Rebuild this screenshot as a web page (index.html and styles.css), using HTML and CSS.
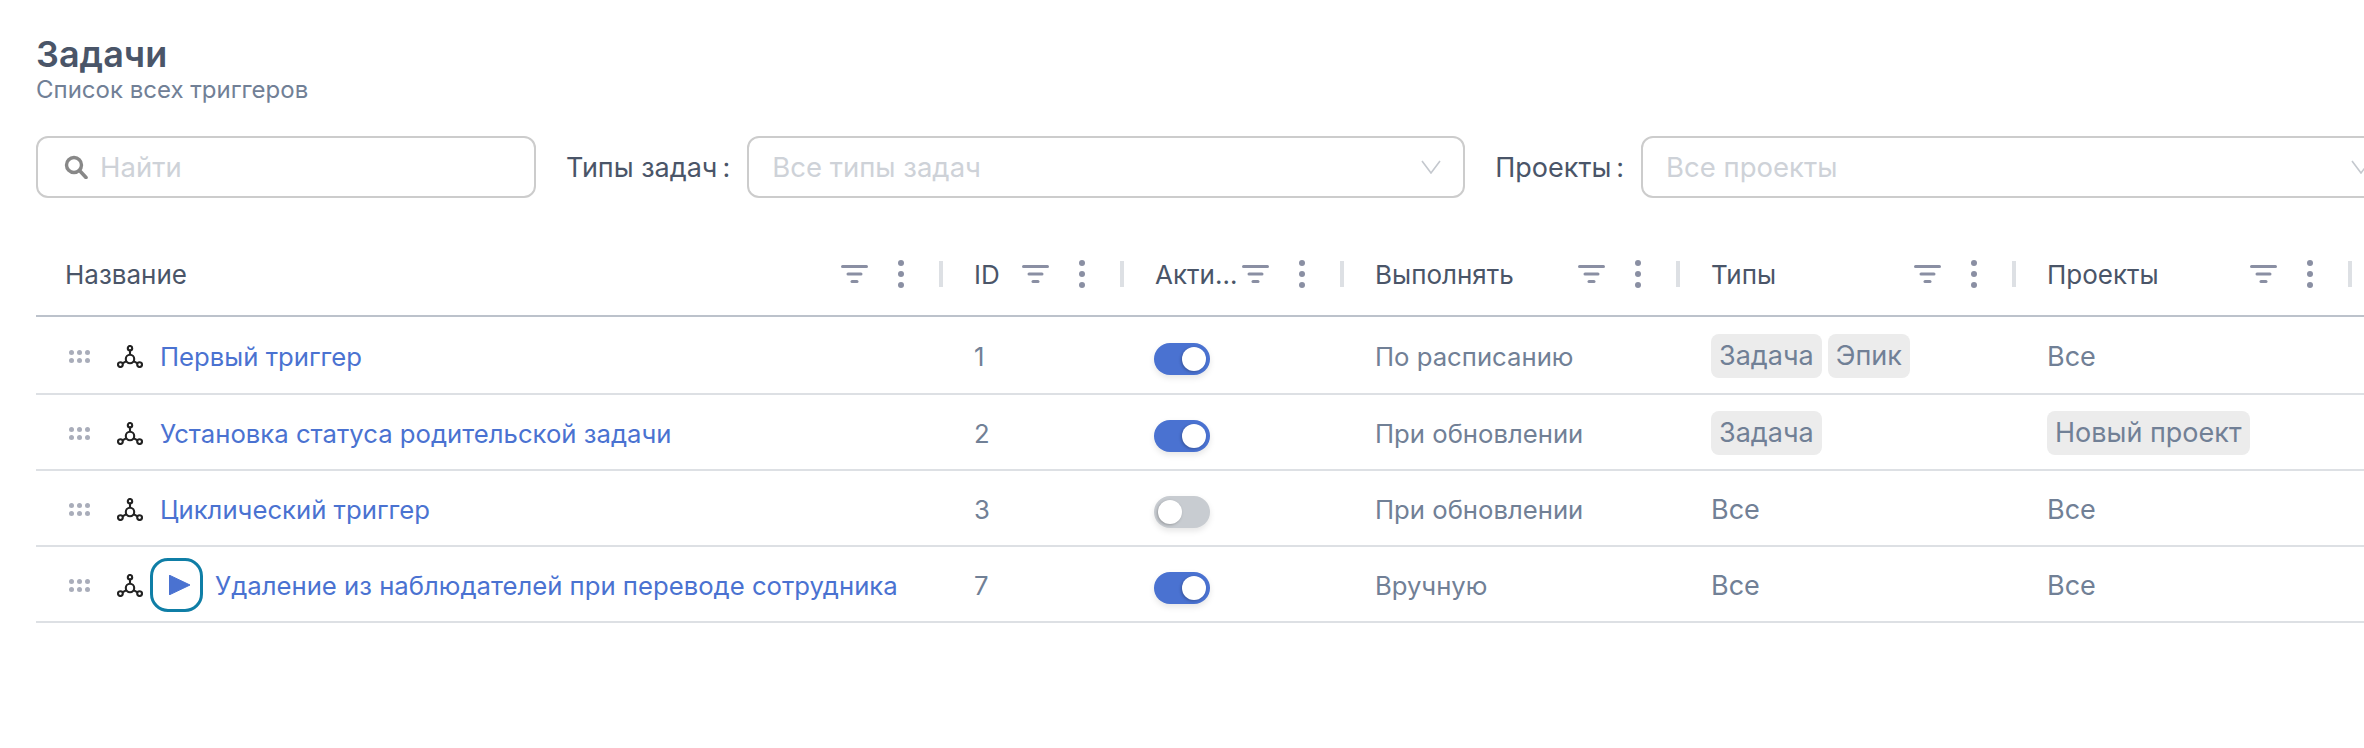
FILE: index.html
```html
<!DOCTYPE html>
<html>
<head>
<meta charset="UTF-8">
<title>Задачи</title>
<meta name="viewport" content="width=device-width, initial-scale=1.0">
<link rel="stylesheet" href="styles.css">
</head>
<body>
	<svg class="sprite" width="0" height="0">
		<symbol id="ico-filter" viewBox="0 0 27 18">
			<rect x="0" y="0" width="27" height="3" rx="1.5"/>
			<rect x="5.5" y="7.5" width="16" height="3" rx="1.5"/>
			<rect x="9.5" y="15" width="8" height="3" rx="1.5"/>
		</symbol>
		<symbol id="ico-more" viewBox="0 0 6 28">
			<circle cx="3" cy="3" r="3"/>
			<circle cx="3" cy="14" r="3"/>
			<circle cx="3" cy="25" r="3"/>
		</symbol>
		<symbol id="ico-drag" viewBox="0 0 21 13">
			<circle cx="2.5" cy="2.5" r="2.5"/>
			<circle cx="10.5" cy="2.5" r="2.5"/>
			<circle cx="18.5" cy="2.5" r="2.5"/>
			<circle cx="2.5" cy="10.5" r="2.5"/>
			<circle cx="10.5" cy="10.5" r="2.5"/>
			<circle cx="18.5" cy="10.5" r="2.5"/>
		</symbol>
		<symbol id="ico-node" viewBox="0 0 26 23">
			<g fill="none" stroke="#222" stroke-width="2.1">
				<circle cx="13" cy="3.2" r="2.2"/>
				<circle cx="13" cy="14" r="4.2"/>
				<circle cx="3.4" cy="19.6" r="2.4"/>
				<circle cx="22.6" cy="19.6" r="2.4"/>
				<path d="M13 5.4V9.8M9.4 16.1L5.5 18.4M16.6 16.1L20.5 18.4"/>
			</g>
		</symbol>
		<symbol id="ico-chevron" viewBox="0 0 20 14">
			<path d="M1 1L10 13L19 1" fill="none" stroke="#c4c8ce" stroke-width="1.6"/>
		</symbol>
	</svg>

	<div class="page">
		<h1 class="title">Задачи</h1>
		<div class="subtitle">Список всех триггеров</div>

		<div class="filters">
			<div class="search">
				<svg class="search-icon" viewBox="0 0 24 24" width="24" height="24">
					<circle cx="10" cy="10" r="7.5" fill="none" stroke="#888" stroke-width="3.4"/>
					<path d="M15.5 15.5L22 22.5" stroke="#888" stroke-width="3.6" stroke-linecap="round"/>
				</svg>
				<input type="text" placeholder="Найти">
			</div>

			<label class="filter-label filter-label-types">Типы задач<span class="colon">:</span></label>
			<div class="select select-types">
				<span>Все типы задач</span>
				<svg class="chevron"><use href="#ico-chevron"/></svg>
			</div>

			<label class="filter-label filter-label-projects">Проекты<span class="colon">:</span></label>
			<div class="select select-projects">
				<span>Все проекты</span>
				<svg class="chevron"><use href="#ico-chevron"/></svg>
			</div>
		</div>

		<table class="grid">
			<colgroup>
				<col class="col-name">
				<col class="col-id">
				<col class="col-active">
				<col class="col-wide">
				<col class="col-wide">
				<col class="col-wide">
				<col class="col-rest">
			</colgroup>
			<thead>
				<tr>
					<th class="first"><div class="th-in"><span class="th-text">Название</span><svg class="filter"><use href="#ico-filter"/></svg><svg class="more"><use href="#ico-more"/></svg><i class="sep"></i></div></th>
					<th><div class="th-in"><span class="th-text">ID</span><svg class="filter"><use href="#ico-filter"/></svg><svg class="more"><use href="#ico-more"/></svg><i class="sep"></i></div></th>
					<th><div class="th-in"><span class="th-text">Активность</span><svg class="filter"><use href="#ico-filter"/></svg><svg class="more"><use href="#ico-more"/></svg><i class="sep"></i></div></th>
					<th><div class="th-in"><span class="th-text">Выполнять</span><svg class="filter"><use href="#ico-filter"/></svg><svg class="more"><use href="#ico-more"/></svg><i class="sep"></i></div></th>
					<th><div class="th-in"><span class="th-text">Типы</span><svg class="filter"><use href="#ico-filter"/></svg><svg class="more"><use href="#ico-more"/></svg><i class="sep"></i></div></th>
					<th><div class="th-in"><span class="th-text">Проекты</span><svg class="filter"><use href="#ico-filter"/></svg><svg class="more"><use href="#ico-more"/></svg><i class="sep"></i></div></th>
					<th></th>
				</tr>
			</thead>
			<tbody>
				<tr>
					<td class="first"><div class="name-in"><svg class="drag"><use href="#ico-drag"/></svg><svg class="node"><use href="#ico-node"/></svg><a href="#">Первый триггер</a></div></td>
					<td>1</td>
					<td><span class="toggle on"></span></td>
					<td>По расписанию</td>
					<td class="meta"><span class="tag">Задача</span><span class="tag">Эпик</span></td>
					<td class="meta">Все</td>
					<td></td>
				</tr>
				<tr>
					<td class="first"><div class="name-in"><svg class="drag"><use href="#ico-drag"/></svg><svg class="node"><use href="#ico-node"/></svg><a href="#">Установка статуса родительской задачи</a></div></td>
					<td>2</td>
					<td><span class="toggle on"></span></td>
					<td>При обновлении</td>
					<td class="meta"><span class="tag">Задача</span></td>
					<td class="meta"><span class="tag">Новый проект</span></td>
					<td></td>
				</tr>
				<tr>
					<td class="first"><div class="name-in"><svg class="drag"><use href="#ico-drag"/></svg><svg class="node"><use href="#ico-node"/></svg><a href="#">Циклический триггер</a></div></td>
					<td>3</td>
					<td><span class="toggle"></span></td>
					<td>При обновлении</td>
					<td class="meta">Все</td>
					<td class="meta">Все</td>
					<td></td>
				</tr>
				<tr>
					<td class="first"><div class="name-in"><svg class="drag"><use href="#ico-drag"/></svg><svg class="node"><use href="#ico-node"/></svg><button type="button" class="run"><svg viewBox="0 0 21 20" width="21" height="20"><path d="M0 0L21 10L0 20Z" stroke="#4a72d1" stroke-width="1" stroke-linejoin="round"/></svg></button><a href="#">Удаление из наблюдателей при переводе сотрудника</a></div></td>
					<td>7</td>
					<td><span class="toggle on"></span></td>
					<td>Вручную</td>
					<td class="meta">Все</td>
					<td class="meta">Все</td>
					<td></td>
				</tr>
			</tbody>
		</table>
	</div>
</body>
</html>
```
FILE: styles.css
```css
html, body {
	margin: 0;
	height: 100%;
	background: #fff;
	overflow: hidden;
}

body {
	font-family: Inter, "Noto Sans", sans-serif;
	color: #4a5568;
}

.sprite {
	display: none;
}

.page {
	width: 2800px;
	padding: 34px 0 0 36px;
	box-sizing: border-box;
}

.title {
	margin: 0;
	font-size: 36px;
	line-height: 40px;
	font-weight: 600;
	color: #4a5568;
}

.subtitle {
	font-size: 24px;
	line-height: 28px;
	color: #718096;
	margin-top: 2px;
}

.filters {
	display: flex;
	align-items: center;
	margin-top: 32px;
}

.search {
	display: flex;
	align-items: center;
	width: 500px;
	height: 62px;
	box-sizing: border-box;
	border: 2px solid #ccc;
	border-radius: 12px;
	padding-left: 26px;
}

.search-icon {
	flex: none;
	margin-right: 12px;
}

.search input {
	border: none;
	outline: none;
	flex: 1;
	min-width: 0;
	padding: 0;
	font: 27.5px Inter, sans-serif;
	color: #4a5568;
}

.search input::placeholder {
	color: #ced2d8;
	opacity: 1;
}

.filter-label {
	font-size: 27px;
	color: #4a5568;
	white-space: nowrap;
}

.filter-label-types {
	margin-left: 30px;
}

.filter-label-projects {
	margin-left: 30px;
}

.colon {
	margin: 0 17px 0 5px;
}

.select {
	display: flex;
	align-items: center;
	justify-content: space-between;
	flex: none;
	height: 62px;
	box-sizing: border-box;
	border: 2px solid #ccc;
	border-radius: 12px;
	padding: 0 22px 0 23px;
	font-size: 27.5px;
	color: #ced2d8;
}

.select-types {
	width: 718px;
}

.select-projects {
	width: 754px;
}

.chevron {
	width: 20px;
	height: 14px;
}

.grid {
	border-collapse: collapse;
	table-layout: fixed;
	width: 2764px;
	margin-top: 35px;
}

.col-name { width: 907px; }
.col-id { width: 181px; }
.col-active { width: 220px; }
.col-wide { width: 336px; }

.grid th {
	height: 82px;
	padding: 0 0 0 31px;
	border-bottom: 2px solid #bcc2cb;
	font-weight: 400;
	text-align: left;
}

.grid th.first {
	padding-left: 29px;
}

.th-in {
	display: flex;
	align-items: center;
	font-size: 26px;
	color: #4a5568;
}

.th-text {
	flex: 1;
	min-width: 0;
	overflow: hidden;
	white-space: nowrap;
	text-overflow: ellipsis;
}

.filter {
	flex: none;
	width: 27px;
	height: 18px;
	margin-left: 2px;
	fill: #8a8fa3;
}

.more {
	flex: none;
	width: 6px;
	height: 28px;
	margin-left: 30px;
	fill: #8a8fa3;
}

.sep {
	flex: none;
	width: 4px;
	height: 26px;
	margin: 0 0 0 35px;
	background: #dde0e4;
}

.grid td {
	height: 76px;
	padding: 2px 0 0 31px;
	box-sizing: border-box;
	border-bottom: 2px solid #dde0e4;
	font-size: 25.7px;
	color: #718096;
	white-space: nowrap;
}

.grid tbody tr:first-child td {
	height: 78px;
}

.grid td.first {
	padding-left: 33px;
}

.grid td.meta {
	font-size: 27px;
}

.name-in {
	display: flex;
	align-items: center;
}

.drag {
	flex: none;
	width: 21px;
	height: 13px;
	fill: #a9adba;
	margin-right: 27px;
}

.node {
	flex: none;
	width: 26px;
	height: 23px;
	margin-right: 17px;
}

.name-in a {
	color: #4a72d1;
	text-decoration: none;
}

.run {
	display: flex;
	align-items: center;
	justify-content: center;
	flex: none;
	width: 53px;
	height: 54px;
	margin: 0 12px 0 -10px;
	padding: 0 0 0 6px;
	border: 3px solid #0f7ea6;
	border-radius: 18px;
	background: #fff;
	fill: #4a72d1;
}

.toggle {
	display: block;
	position: relative;
	width: 56px;
	height: 32px;
	margin-left: -1px;
	border-radius: 16px;
	background: #c8ccd1;
	box-shadow: 0 3px 6px rgba(0, 0, 0, 0.1);
	top: 3px;
}

.toggle::after {
	content: "";
	position: absolute;
	top: 4px;
	left: 4px;
	width: 24px;
	height: 24px;
	border-radius: 50%;
	background: #fff;
	box-shadow: -1px 1px 3px rgba(0, 0, 0, 0.25);
}

.toggle.on {
	background: #4a72d1;
}

.toggle.on::after {
	left: 28px;
}

.tag {
	display: inline-block;
	height: 44px;
	line-height: 44px;
	padding: 0 8px;
	margin-right: 6px;
	border-radius: 8px;
	background: #ececec;
}
```
